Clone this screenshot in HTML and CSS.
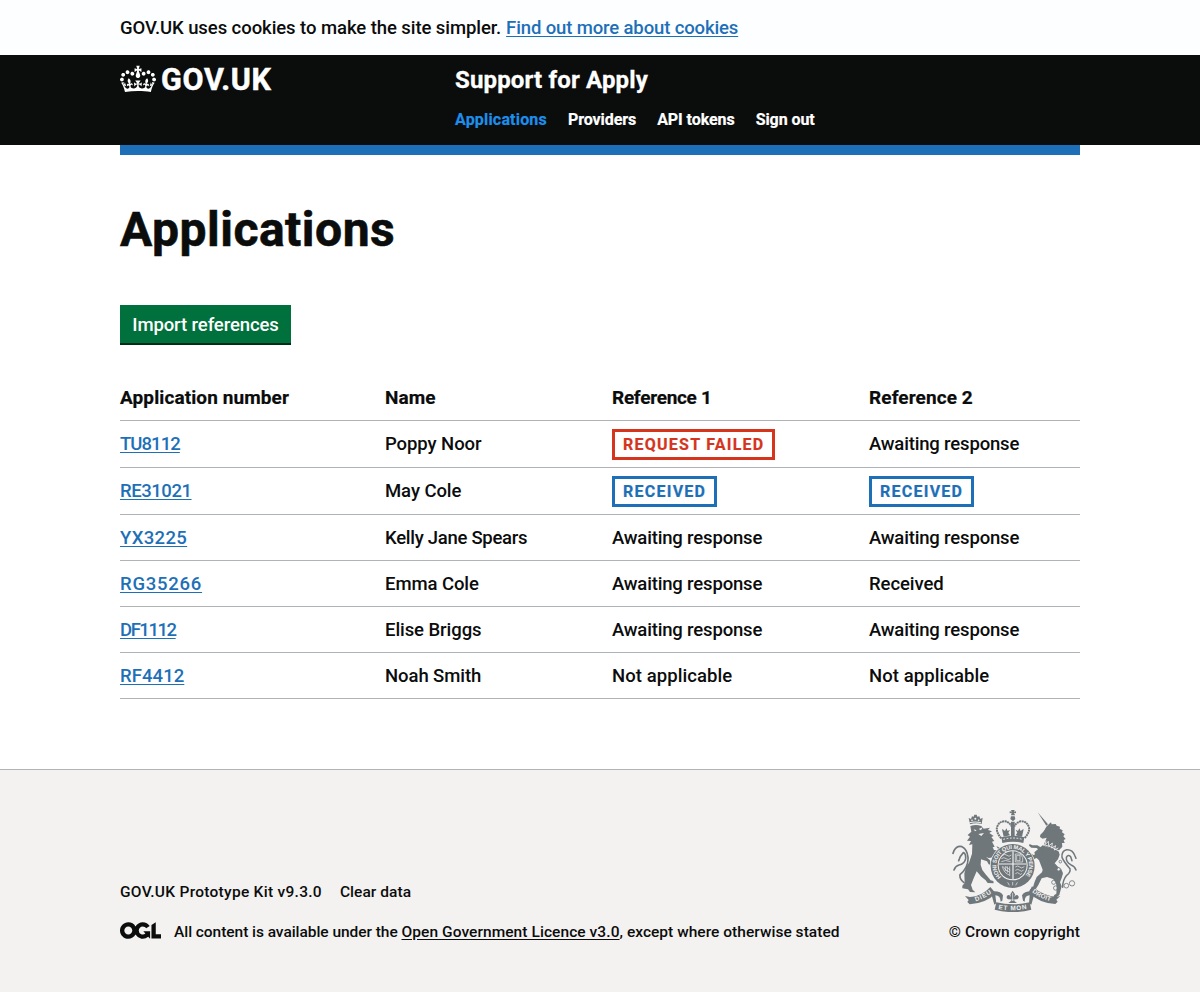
FILE: index.html
```html
<!DOCTYPE html>
<html lang="en">
<head>
<meta charset="utf-8">
<title>Applications - Support for Apply</title>
<link rel="stylesheet" href="styles.css">
</head>
<body>
<div class="cookie-banner"><p class="container"><span class="cookie-text">GOV.UK uses cookies to make the site simpler.</span><a class="link cookie-link" href="#">Find out more about cookies</a></p></div>

<header class="header">
  <div class="container header-row">
    <a class="logo" href="#">
      <svg class="crown" viewBox="0 0 132 97" width="36" height="32" aria-hidden="true"><path fill="currentColor" fill-rule="evenodd" d="M25 30.2c3.5 1.5 7.7-.2 9.1-3.7 1.5-3.6-.2-7.8-3.9-9.2-3.6-1.4-7.6.3-9.1 3.9-1.4 3.5.3 7.5 3.9 9zM9 39.5c3.6 1.5 7.8-.2 9.2-3.7 1.5-3.6-.2-7.8-3.9-9.1-3.6-1.5-7.6.2-9.1 3.8-1.4 3.5.3 7.5 3.8 9zM4.4 57.2c3.5 1.5 7.7-.2 9.1-3.8 1.5-3.6-.2-7.7-3.9-9.1-3.5-1.5-7.6.3-9.1 3.8-1.4 3.5.3 7.6 3.9 9.1zm38.3-21.4c3.5 1.5 7.7-.2 9.1-3.8 1.5-3.6-.2-7.7-3.9-9.1-3.6-1.5-7.6.3-9.1 3.8-1.3 3.6.4 7.7 3.9 9.1zm64.4-5.6c-3.6 1.5-7.8-.2-9.1-3.7-1.5-3.6.2-7.8 3.8-9.2 3.6-1.4 7.7.3 9.2 3.9 1.3 3.5-.4 7.5-3.9 9zm15.9 9.3c-3.6 1.5-7.7-.2-9.1-3.7-1.5-3.6.2-7.8 3.7-9.1 3.6-1.5 7.7.2 9.2 3.8 1.5 3.5-.3 7.5-3.8 9zm4.7 17.7c-3.6 1.5-7.8-.2-9.2-3.8-1.5-3.6.2-7.7 3.9-9.1 3.6-1.5 7.7.3 9.2 3.8 1.3 3.5-.4 7.6-3.9 9.1zM89.3 35.8c-3.6 1.5-7.8-.2-9.2-3.8-1.4-3.6.2-7.7 3.9-9.1 3.6-1.5 7.7.3 9.2 3.8 1.4 3.6-.3 7.7-3.9 9.1zM69.7 17.7l8.9 4.7V9.3l-8.9 2.8c-.2-.3-.5-.6-.9-.9L72.4 0H59.6l3.5 11.2c-.3.3-.6.5-.9.9l-8.8-2.8v13.1l8.8-4.7c.3.3.6.7.9.9l-5 15.4v.1c-.2.8-.4 1.6-.4 2.4 0 4.1 3.1 7.5 7 8.1h.2c.3 0 .7.1 1 .1.4 0 .7 0 1-.1h.2c4-.6 7.1-4.1 7.1-8.1 0-.8-.1-1.7-.4-2.4V34l-5.1-15.4c.4-.2.7-.6 1-.9zM66 92.8c16.9 0 32.8 1.1 47.1 3.2 4-16.9 8.9-26.7 14-33.5l-9.6-3.4c1 4.9 1.1 7.2 0 10.2-1.5-1.4-3-4.3-4.2-8.7L108.6 76c2.8-2 5-3.2 7.5-3.3-4.4 9.4-10 11.9-13.6 11.2-4.3-.8-6.3-4.6-5.6-7.9 1-4.7 5.7-5.9 8-.5 4.3-8.7-3-11.4-7.6-8.8 7.1-7.2 7.9-13.5 2.1-21.1-8 6.1-8.1 12.3-4.5 20.8-4.7-5.4-12.1-2.5-9.5 6.2 3.4-5.2 7.9-2 7.2 3.1-.6 4.3-6.4 7.8-13.5 7.2-10.3-.9-10.9-8-11.2-13.8 2.5-.5 7.1 1.8 11 7.3L80.2 60c-4.1 4.4-8 5.3-12.3 5.4 1.4-4.4 8-11.6 8-11.6H55.5s6.4 7.2 7.9 11.6c-4.2-.1-8-1-12.3-5.4l1.4 16.4c3.9-5.5 8.5-7.7 10.9-7.3-.3 5.8-.9 12.8-11.1 13.8-7.2.6-12.9-2.9-13.5-7.2-.7-5 3.8-8.3 7.1-3.1 2.7-8.7-4.6-11.6-9.4-6.2 3.7-8.5 3.6-14.7-4.6-20.8-5.8 7.6-5 13.9 2.2 21.1-4.7-2.6-11.9.1-7.7 8.8 2.3-5.5 7.1-4.2 8.1.5.7 3.3-1.3 7.1-5.7 7.9-3.5.7-9-1.8-13.5-11.2 2.5.1 4.7 1.3 7.5 3.3l-4.7-15.4c-1.2 4.4-2.7 7.2-4.3 8.7-1.1-3-.9-5.3 0-10.2l-9.5 3.4c5 6.9 9.9 16.7 14 33.5 14.8-2.1 30.8-3.2 47.7-3.2z"/></svg>
      <span class="logotype">GOV.UK</span>
    </a>
    <div class="header-content">
      <a class="product" href="#">Support for Apply</a>
      <nav class="nav">
        <a class="nav-active" href="#">Applications</a>
        <a href="#">Providers</a>
        <a href="#">API tokens</a>
        <a href="#">Sign out</a>
      </nav>
    </div>
  </div>
</header>

<main class="container main">
  <h1 class="heading">Applications</h1>
  <button class="button" type="button">Import references</button>
  <table class="table">
    <colgroup><col class="col-number"><col class="col-name"><col class="col-ref1"><col></colgroup>
    <thead><tr><th>Application number</th><th>Name</th><th class="tight">Reference 1</th><th>Reference 2</th></tr></thead>
    <tbody>
      <tr class="tagged"><td><a class="link ones-2" href="#">TU8112</a></td><td>Poppy Noor</td><td><strong class="tag tag-red">Request failed</strong></td><td class="status">Awaiting response</td></tr>
      <tr class="tagged"><td><a class="link ones-1" href="#">RE31021</a></td><td>May Cole</td><td><strong class="tag">Received</strong></td><td><strong class="tag">Received</strong></td></tr>
      <tr><td><a class="link" href="#">YX3225</a></td><td class="tight">Kelly Jane Spears</td><td class="status">Awaiting response</td><td class="status">Awaiting response</td></tr>
      <tr><td><a class="link wide" href="#">RG35266</a></td><td>Emma Cole</td><td class="status">Awaiting response</td><td>Received</td></tr>
      <tr><td><a class="link ones-3" href="#">DF1112</a></td><td>Elise Briggs</td><td class="status">Awaiting response</td><td class="status">Awaiting response</td></tr>
      <tr><td><a class="link narrow" href="#">RF4412</a></td><td>Noah Smith</td><td class="na">Not applicable</td><td class="na">Not applicable</td></tr>
    </tbody>
  </table>
</main>

<footer class="footer">
  <div class="container footer-row">
    <div class="footer-meta">
      <div class="footer-links"><a class="kit" href="#">GOV.UK Prototype Kit v9.3.0</a><a class="clear" href="#">Clear data</a></div>
      <div class="licence">
        <svg class="ogl" viewBox="0 0 483.2 195.7" width="41" height="17" aria-hidden="true"><path fill="currentColor" d="M421.5 142.8V.1l-50.7 32.3v161.1h112.4v-50.7zm-122.3-9.6A47.12 47.12 0 0 1 221 97.8c0-26 21.1-47.1 47.1-47.1 16.7 0 31.4 8.7 39.7 21.8l42.7-27.2A97.63 97.63 0 0 0 268.1 0c-36.5 0-68.3 20.1-85.1 49.7A98 98 0 0 0 97.8 0C43.9 0 0 43.9 0 97.8s43.9 97.8 97.8 97.8c36.5 0 68.3-20.1 85.1-49.7a97.76 97.76 0 0 0 149.6 25.4l19.4 22.2h3v-87.8h-80l24.3 27.5zM97.8 145c-26 0-47.1-21.1-47.1-47.1s21.1-47.1 47.1-47.1 47.1 21.1 47.1 47.1S123.8 145 97.8 145"/></svg>
        <span><span class="licence-lead">All content is available under the </span><a class="licence-link" href="#">Open Government Licence v3.0</a><span class="licence-tail">, except where otherwise stated</span></span>
      </div>
    </div>
    <a class="copyright" href="#">
      <svg class="crest" viewBox="36 30 375 306" width="125" height="102" aria-hidden="true">
        <defs>
          <path id="garter" d="M184 231A49 49 0 1 1 252 231"/>
          <path id="dieu" d="M107 304Q132 296 157 279"/>
          <path id="etmon" d="M175 327Q218 335 262 326"/>
          <path id="droit" d="M276 276Q300 296 334 304"/>
        </defs>
        <!-- lion -->
        <g fill="#6f777b">
          <path d="M90 73l-4-19 7 3 3-8 5 1 2-6h7l2 6 6-1 3 8 7-4-3 19q-18-5-35 1z"/>
          <path d="M91 78q17-6 33 0l7 8 19-3-6 7 12 4-8 5 13 9-7 3 9 12-7 2 8 15-6 2 4 8q12 2 12-4l-5-8 10 5 2 11q-2 12-17 18l-18 2-8-4 12 11 4 14-8-2-5-9-18-6-1 17 5 15 11 14 14 17 8 2 1 7-18-1-6-8-13-11-14-16-9 21-8 20 5 14 8 8-16-1-6-8-17-3 0-8 7-8-1-28 5-20 9-13 9-27 1-28-10 2 6-12-12-1 9-12-7-5 11-10z"/>
        </g>
        <g fill="none" stroke="#6f777b" stroke-width="5" stroke-linecap="round"><path d="M72 248Q58 238 60 224 86 202 84 172 82 148 66 140 50 136 42 152L39 160"/><path d="M42 210Q46 198 57 195 74 192 77 176 78 160 70 158 60 168 56 182"/></g>
        <g fill="#f3f2f1"><circle cx="96" cy="61" r="2.5"/><circle cx="106" cy="56" r="3"/><circle cx="116" cy="61" r="2.5"/><path d="M88 67q17-5 35 0v3q-17-5-35 0zM101 88l9 3-5 3zM116 87l12-5-5 9zM115 102l17-3-8 9z"/></g>
        <!-- unicorn -->
        <g fill="#6f777b">
          <path d="M293 37l31 36-5 4z"/>
          <path d="M319 80l8-8 6-5 2 6 12-1 3 5 10 3-1 6 9 5-2 6 8 6-4 6 7 8-6 3 3 9-8 0 1 11-10 11-12 3-34-19 4-10 5-12-12 3-8-5 1-7 9-9z"/>
          <path d="M308 136l48 18 3 10-5 14-10 12 10 10 10 8 5 12-4 14-5 13 5 12-7 26-10 8-8-2 3-6 6-4 1-20-3-14-8-10-18-6-16 4-10 20-9 14-7 5h-11l3-6 7-3 6-20 6-14 16-14 2-8-4-10-7-18-10-10-4-14z"/>
          <path d="M306 158l-16-14-16-1-7-6 2-5 8 4 15 0 18 10zM300 170l-16 6-9 10-6-3 5-12-8-6 5-6 9 6 18-6z"/>
        </g>
        <g fill="none" stroke="#6f777b" stroke-width="4.5" stroke-linecap="round"><path d="M368 262Q368 240 380 226 392 218 390 206 372 186 366 172 364 152 380 149 398 148 404 166L408 175"/><path d="M408 210Q404 198 392 194 378 186 379 172 384 162 392 170L396 182"/></g>
        <path d="M308 88l7-3-2 5z" fill="#f3f2f1"/>
        <path d="M309 133q24 6 48 20M318 122l-3 12 10-10 1 14 11-9-2 15 12-7-4 13 12-6" fill="none" stroke="#f3f2f1" stroke-width="2.5"/>
        <g fill="none" stroke="#6f777b" stroke-width="2.5"><circle cx="341" cy="247" r="6"/><circle cx="347" cy="264" r="6.5"/><circle cx="379" cy="257" r="7"/><circle cx="396" cy="250" r="8"/><circle cx="356" cy="208" r="5" fill="#f3f2f1"/><circle cx="361" cy="185" r="4"/></g>
        <!-- crown -->
        <g fill="#6f777b">
          <path d="M215 38l-6 2v-6l6 1-2-5h11l-2 5 6-1v6l-6-2 3 8h-12zM213 49h11l2 8-7 7-8-7z"/>
          <path d="M184 112q34-10 69 0l-3 17q-31-8-63 0z"/>
          <path d="M213 65h11v43h-11zM188 88l7 5 4-8 4 8 7-4-5 9 5 8-19 4-5-22zM249 88l-7 5-4-8-4 8-7-4 5 9-5 8 19 4 5-22z"/>
        </g>
        <path d="M184 115q-16-18-13-33 6-19 25-18 12 3 18 13h10q6-10 18-13 19-1 25 18 3 15-14 33" fill="none" stroke="#6f777b" stroke-width="6" stroke-dasharray="6 1.5"/>
        <path d="M190 118q29-8 57 0" fill="none" stroke="#f3f2f1" stroke-width="3" stroke-dasharray="5 5"/>
        <!-- garter and shield -->
        <circle cx="218" cy="198" r="68" fill="#f3f2f1"/>
        <circle cx="218" cy="198" r="66" fill="#6f777b"/>
        <circle cx="218" cy="196" r="45" fill="#f3f2f1"/>
        <circle cx="218" cy="196" r="42" fill="#6f777b"/>
        <g fill="none" stroke="#f3f2f1" stroke-width="2">
          <path d="M219 154v84M177 192h82" stroke-width="3.5"/>
          <path d="M187 166q8-6 14 0t13-1M184 176q8-6 14 0t15-1M184 185q12-7 28 0"/>
          <path d="M226 162h14l8 10v14h-22zM230 166h10v16h-10z"/>
          <path d="M187 199q5 21 21 26M189 199q8 15 20 17M196 199l15 11M202 199v19M209 199v29M196 200v13"/>
          <path d="M226 201q8-6 13 0t14-1M226 211q8-6 13 0t12-1M226 221q7-6 12 0t7-1"/>
          <path d="M203 247l5 9M232 247l-5 9M218 246v10"/>
        </g>
        <g class="motto" fill="#f3f2f1"><text font-size="17"><textPath href="#garter" textLength="226">HONI SOIT QUI MAL Y PENSE</textPath></text></g>
        <!-- ribbon -->
        <g fill="#6f777b">
          <path d="M75 288l15 3q34-1 61-30l16 19q-28 30-78 33l-7-7 4-6zM361 288l-12 3q-38-3-73-32l-10 19q32 31 80 34l7-7-4-6z"/>
          <path d="M169 307q49 12 100 0l5 22q-55 15-110 0z"/>
          <path d="M154 282l9-8q20 0 26 12l-2 16-5 3q-1-19-16-19l3 24-6 4zM283 282l-9-8q-22 0-28 12l3 16 5 3q0-19 15-19l-2 24 7 4z"/>
          <path d="M218 272l7 11-2 9q4-9 10-6 7 6-1 12-5-1-9 1l1 5 7 5h-26l7-5 1-5q-4-2-9-1-8-6-1-12 6-3 10 6l-2-9z"/>
        </g>
        <path d="M218 279v24M209 300h18" stroke="#f3f2f1" stroke-width="2"/>
        <g class="motto" fill="#f3f2f1" font-size="19"><text><textPath href="#dieu" textLength="54">DIEU</textPath></text><text><textPath href="#etmon" textLength="86">ET MON</textPath></text><text><textPath href="#droit" textLength="62">DROIT</textPath></text></g>
      </svg>
      <span>© Crown copyright</span>
    </a>
  </div>
</footer>
</body>
</html>
```
FILE: styles.css
```css
* { box-sizing: border-box; }
body {
  margin: 0;
  background: #fff;
  color: #0b0c0c;
  font: 500 18.5px/25px Roboto, sans-serif;
  letter-spacing: -.07px;
}
a { color: inherit; text-decoration: none; }
.container { width: 960px; margin: 0 auto; }
.link { color: #1d70b8; text-decoration: underline; text-decoration-thickness: 1px; text-underline-offset: 2px; }

.cookie-banner { padding: 16px 0 14px; background: #fdfeff; }
.cookie-link { margin-left: 5px; letter-spacing: -.13px; }

.header { background: #0b0c0c; color: #fff; font-weight: 700; }
.header-row { display: flex; height: 90px; padding-top: 10px; position: relative; }
.header-row::after { content: ""; position: absolute; left: 0; right: 0; top: 100%; height: 10px; background: #1d70b8; }
.logo { display: flex; width: 335px; gap: 5px; align-items: flex-start; }
.crown { display: block; margin-top: -2px; }
.logotype { font-size: 30.5px; line-height: 30px; letter-spacing: .7px; -webkit-text-stroke: .5px currentColor; }
.product { display: block; font-size: 24px; line-height: 30px; letter-spacing: .16px; -webkit-text-stroke: .3px currentColor; }
.nav { display: flex; gap: 21px; margin-top: 15px; font-size: 16px; line-height: 20px; -webkit-text-stroke: .2px currentColor; }
.nav-active { color: #1d8feb; letter-spacing: .18px; }

.main { padding: 60px 0 70px; }
.heading { margin: 0 0 50px; font-size: 48px; line-height: 50px; font-weight: 700; letter-spacing: .5px; -webkit-text-stroke: .6px currentColor; }
.button {
  display: block;
  width: 171px;
  height: 38px;
  margin: 0 0 32px;
  padding: 2px 0 0;
  border: 0;
  background: #00703c;
  box-shadow: 0 2px 0 #002d18;
  color: #fff;
  font: 500 18.5px/36px Roboto, sans-serif;
  letter-spacing: -.1px;
}
.table { width: 100%; border-collapse: separate; border-spacing: 0; table-layout: fixed; }
.col-number { width: 265px; }
.col-name { width: 227px; }
.col-ref1 { width: 257px; }
.table th, .table td { height: 46px; padding: 1px 0 0; border-bottom: 1px solid #b1b4b6; text-align: left; vertical-align: middle; }
.table th { padding: 0; font-size: 19px; font-weight: 700; letter-spacing: .1px; -webkit-text-stroke: .2px currentColor; }
.table .tagged td { height: 47px; padding: 0; }
.table .tight { letter-spacing: -.28px; }
.table .status { letter-spacing: -.17px; }
.table .na { letter-spacing: .07px; }
.table .link { letter-spacing: .33px; }
.table .wide { letter-spacing: .75px; }
.table .narrow { letter-spacing: .07px; }
.table .ones-1 { letter-spacing: -.45px; }
.table .ones-2 { letter-spacing: -.93px; }
.table .ones-3 { letter-spacing: -1.45px; }
.tag {
  display: block;
  width: max-content;
  margin-top: 1px;
  padding: 5px 8px 4px 8px;
  border: 3px solid #1d70b8;
  color: #1d70b8;
  font-size: 16px;
  line-height: 16px;
  font-weight: 700;
  letter-spacing: 1.25px;
  text-transform: uppercase;
  -webkit-text-stroke: .2px currentColor;
}
.tag-red { border-color: #d4351c; color: #d4351c; }

.footer { height: 223px; padding-top: 40px; border-top: 1px solid #b1b4b6; background: #f3f2f1; font-size: 15.5px; line-height: 20px; }
.footer-row { display: flex; justify-content: space-between; align-items: flex-end; }
.footer-links { display: flex; gap: 18px; margin-bottom: 20px; }
.kit { letter-spacing: .28px; }
.clear { letter-spacing: .05px; }
.licence { display: flex; gap: 13px; }
.ogl { display: block; }
.licence-lead { letter-spacing: -.05px; }
.licence-link { text-decoration: underline; text-underline-offset: 2px; letter-spacing: .07px; }
.licence-tail { letter-spacing: .03px; }
.copyright { display: flex; flex-direction: column; align-items: flex-end; gap: 10px; letter-spacing: .12px; }
.crest { display: block; margin-right: 3px; }
.motto { font-family: "Liberation Sans", Arial, sans-serif; font-weight: 700; letter-spacing: 0; }
```
